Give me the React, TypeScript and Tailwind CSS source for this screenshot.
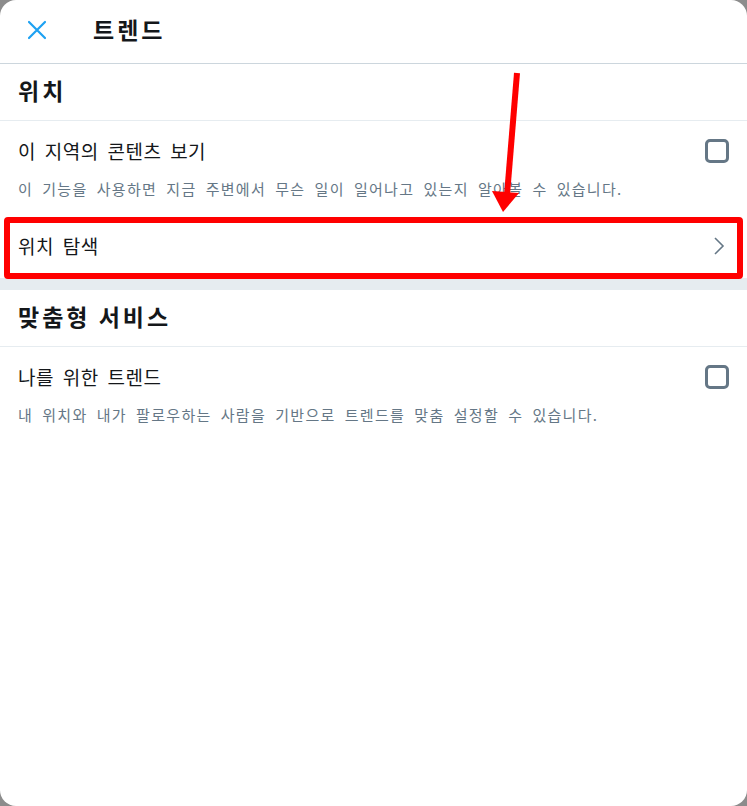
import React from "react";

const font = { fontFamily: '"Noto Sans CJK KR", "Noto Sans", sans-serif' };

function Checkbox() {
  return <div className="w-[24px] h-[24px] rounded-[5px] border-[3px] border-[#657786] shrink-0" />;
}

export default function App() {
  return (
    <div className="w-[747px] h-[806px] bg-[#8c8c8c] overflow-hidden" style={font}>
      <div className="relative w-full h-full bg-white rounded-[16px] overflow-hidden">
        {/* header */}
        <div className="h-[64px] border-b border-[#ccd6dd] flex items-center pb-[4px]">
          <div className="w-[74px] flex justify-center">
            <svg width="20" height="20" viewBox="0 0 20 20">
              <path d="M2 2 L18 18 M18 2 L2 18" stroke="#1da1f2" strokeWidth="2.2" strokeLinecap="round" />
            </svg>
          </div>
          <div className="ml-[19px] text-[23px] font-bold text-[#14171a] leading-none tracking-[3px]">트렌드</div>
        </div>

        {/* 위치 heading */}
        <div className="h-[57px] border-b border-[#e6ecf0] flex items-center px-[18px] pb-[4px]">
          <div className="text-[23px] font-bold text-[#14171a] leading-none tracking-[3px]">위치</div>
        </div>

        {/* row 1 */}
        <div className="px-[18px] pt-[18px] pb-[15px]">
          <div className="flex items-center justify-between h-[24px]">
            <div className="text-[19px] text-[#14171a] leading-[24px] tracking-[0.5px] [word-spacing:4px]">이 지역의 콘텐츠 보기</div>
            <Checkbox />
          </div>
          <div className="mt-[16px] text-[15px] text-[#657786] leading-[20px] tracking-[1.3px] [word-spacing:4.5px] whitespace-nowrap">
            이 기능을 사용하면 지금 주변에서 무슨 일이 일어나고 있는지 알아볼 수 있습니다.
          </div>
        </div>

        {/* 위치 탐색 */}
        <div className="h-[64px] px-[18px] flex items-center justify-between">
          <div className="text-[19px] text-[#14171a] leading-[24px] tracking-[0.5px] [word-spacing:4px]">위치 탐색</div>
          <svg width="12" height="20" viewBox="0 0 12 20" className="mr-[4px]">
            <path d="M2 2 L10 10 L2 18" stroke="#657786" strokeWidth="1.6" fill="none" />
          </svg>
        </div>

        {/* gray band */}
        <div className="h-[12px] bg-[#e6ecf0]" />

        {/* 맞춤형 서비스 */}
        <div className="h-[57px] border-b border-[#e6ecf0] flex items-center px-[18px] pb-[4px]">
          <div className="text-[23px] font-bold text-[#14171a] leading-none tracking-[3px]">맞춤형 서비스</div>
        </div>

        <div className="px-[18px] pt-[18px] pb-[15px]">
          <div className="flex items-center justify-between h-[24px]">
            <div className="text-[19px] text-[#14171a] leading-[24px] tracking-[0.5px] [word-spacing:4px]">나를 위한 트렌드</div>
            <Checkbox />
          </div>
          <div className="mt-[16px] text-[15px] text-[#657786] leading-[20px] tracking-[1.3px] [word-spacing:4.5px] whitespace-nowrap">
            내 위치와 내가 팔로우하는 사람을 기반으로 트렌드를 맞춤 설정할 수 있습니다.
          </div>
        </div>

        {/* red highlight box */}
        <div className="absolute left-[4px] top-[217px] w-[739px] h-[62px] border-[6px] border-[#ff0000] rounded-[4px]" />

        {/* red arrow */}
        <svg className="absolute left-0 top-0" width="747" height="806" viewBox="0 0 747 806">
          <line x1="517" y1="73" x2="507" y2="195" stroke="#ff0000" strokeWidth="6" />
          <polygon points="492,191 519,193 503,212" fill="#ff0000" />
        </svg>
      </div>
    </div>
  );
}
